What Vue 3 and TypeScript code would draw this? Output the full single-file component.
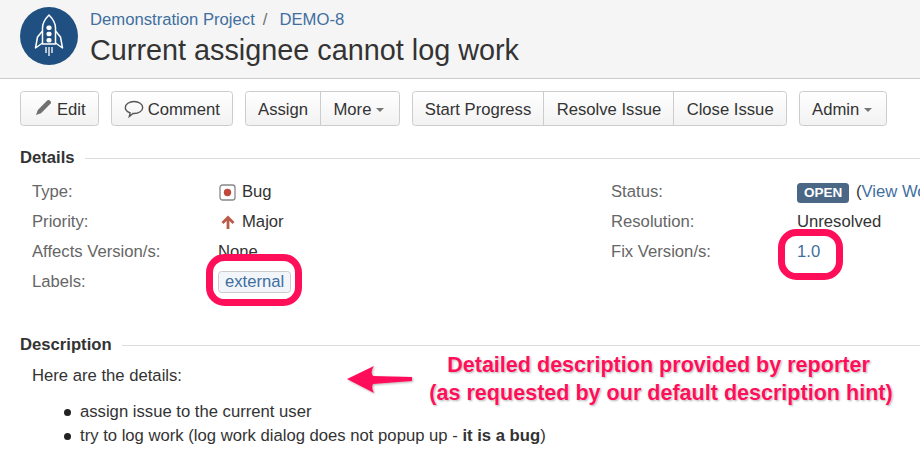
<script setup lang="ts">
interface Field { label: string; value: string; kind?: string }
const left: Field[] = [
  { label: 'Type:', value: 'Bug', kind: 'bug' },
  { label: 'Priority:', value: 'Major', kind: 'major' },
  { label: 'Affects Version/s:', value: 'None' },
  { label: 'Labels:', value: 'external', kind: 'label' },
]
const groups: string[][] = [['Assign', 'More'], ['Start Progress', 'Resolve Issue', 'Close Issue'], ['Admin']]
const hasCaret = (b: string): boolean => b === 'More' || b === 'Admin'
</script>

<template>
  <div class="page">
    <header class="head">
      <svg class="avatar" viewBox="0 0 58 58" width="58" height="58">
        <circle cx="29" cy="29" r="29" fill="#205081" />
        <g fill="none" stroke="#fff" stroke-width="1.5" stroke-linejoin="round">
          <path d="M29 8c-4 4-6.500 8-6.500 13v16h13V21c0-5-2.500-9-6.500-13z" />
          <path d="M22.500 24l-5 6-2 11 7-5M35.500 24l5 6 2 11-7-5" />
        </g>
        <rect x="26.500" y="18.500" width="5" height="4.500" rx="1.800" fill="#fff" />
        <rect x="26.500" y="24.800" width="5" height="4.500" rx="1.800" fill="#fff" />
        <rect x="26.500" y="31" width="5" height="4.500" rx="1.800" fill="#fff" />
        <path d="M29 40v9M26 40v6M32 40v6" stroke="#fff" stroke-width="1.300" fill="none" />
      </svg>
      <div class="titles">
        <div class="crumbs"><a>Demonstration Project</a><span class="sep">/</span><a>DEMO-8</a></div>
        <h1>Current assignee cannot log work</h1>
      </div>
    </header>

    <div class="toolbar">
      <button class="btn edit">
        <svg class="pencil" width="17" height="17" viewBox="0 0 17 17"><path d="M12.500 1.300q1-.8 2 0l1.200 1.200q.8 1 0 2L6 14.200 1 16l1.800-5z" fill="#707070" /></svg>Edit
      </button>
      <button class="btn comment">
        <svg class="bubble" width="20" height="18" viewBox="0 0 20 18"><path d="M10 1.500c4.800 0 8.700 2.600 8.700 6s-3.900 6-8.700 6H9l-3.700 3 .8-3.700C3.300 11.800 1.300 9.800 1.300 7.500c0-3.400 3.900-6 8.700-6z" fill="none" stroke="#555" stroke-width="1.400" /></svg>Comment
      </button>
      <div v-for="g in groups" :key="g[0]" class="group">
        <button v-for="b in g" :key="b" class="btn" :class="{ drop: hasCaret(b) }">
          {{ b }}<i v-if="hasCaret(b)" class="caret"></i>
        </button>
      </div>
    </div>

    <h2 class="module first"><span>Details</span></h2>
    <div class="details">
      <div class="col">
        <div v-for="f in left" :key="f.label" class="row">
          <span class="lab">{{ f.label }}</span>
          <span class="val">
            <svg v-if="f.kind === 'bug'" class="ic" width="17" height="17" viewBox="0 0 17 17"><rect x="1" y="1" width="15" height="15" rx="2.500" fill="#fff" stroke="#888" stroke-width="1.300" /><circle cx="8.500" cy="8.500" r="3.700" fill="#c0493b" /></svg>
            <svg v-if="f.kind === 'major'" class="ic" width="17" height="17" viewBox="0 0 17 17"><path d="M9 15V5M3.500 9L9 3.500 14.500 9" fill="none" stroke="#bb5b4a" stroke-width="2.800" /></svg>
            <a v-if="f.kind === 'label'" class="tag">{{ f.value }}</a>
            <template v-else>{{ f.value }}</template>
          </span>
        </div>
      </div>
      <div class="col second">
        <div class="row"><span class="lab">Status:</span><span class="val nowrap"><b class="lozenge">OPEN</b> (<a>View Workflow</a>)</span></div>
        <div class="row"><span class="lab">Resolution:</span><span class="val">Unresolved</span></div>
        <div class="row"><span class="lab">Fix Version/s:</span><span class="val"><a>1.0</a></span></div>
      </div>
    </div>

    <h2 class="module second-mod"><span>Description</span></h2>
    <div class="desc">
      <p>Here are the details:</p>
      <ul>
        <li>assign issue to the current user</li>
        <li>try to log work (log work dialog does not popup up - <b>it is a bug</b>)</li>
      </ul>
    </div>

    <svg class="marks" width="920" height="450" viewBox="0 0 920 450">
      <defs>
        <filter id="sh" x="-10%" y="-20%" width="120%" height="140%"><feDropShadow dx="1" dy="1" stdDeviation="1" flood-color="#000" flood-opacity=".3" /></filter>
      </defs>
      <rect x="209.500" y="257.500" width="89" height="45" rx="15" fill="none" stroke="#ff0f5a" stroke-width="7" />
      <rect x="781.500" y="232.500" width="58" height="44" rx="15" fill="none" stroke="#ff0f5a" stroke-width="7" />
      <path d="M347 379L374 366Q370 372 373 376L412 377V381L373 384Q371 387 374 393Z" fill="#ff0f5a" filter="url(#sh)" />
    </svg>
    <div class="note"><span class="l1">Detailed description provided by reporter</span><br />(as requested by our default description hint)</div>
  </div>
</template>

<style scoped>
.page { position: relative; width: 920px; height: 450px; overflow: hidden; background: #fff; color: #333; font: 16.670px/22px "Liberation Sans", Arial, sans-serif; }
a { color: #3f6f9f; }
.head { display: flex; gap: 12px; height: 79px; padding: 7px 20px 0; box-sizing: border-box; background: #f5f5f5; border-bottom: 1px solid #ccc; }
.avatar { flex: none; }
.crumbs { color: #707070; line-height: 24px; margin-top: 1px; }
.sep { margin: 0 12px 0 8px; }
h1 { margin: 0; font-size: 28.800px; font-weight: 400; line-height: 36px; color: #333; }
.toolbar { display: flex; gap: 12px; padding: 12px 20px 0; }
.btn { display: flex; align-items: center; gap: 5px; height: 35px; padding: 2px 12.200px 0; box-sizing: border-box; font: inherit; color: #333; background: linear-gradient(#fff, #f2f2f2); border: 1px solid #ccc; border-radius: 3.500px; }
.btn.drop { padding-right: 14.200px; }
.group { display: flex; }
.group .btn { border-radius: 0; margin-left: -1px; }
.group .btn:first-child { border-radius: 3.500px 0 0 3.500px; margin-left: 0; }
.group .btn:last-child { border-radius: 0 3.500px 3.500px 0; }
.group .btn:only-child { border-radius: 3.500px; }
.edit { padding: 2px 12px 0 14px; }
.comment { padding: 2px 12px 0; gap: 4px; }
.pencil { margin-top: -4px; }
.bubble { margin-top: -2px; }
.caret { width: 0; height: 0; border: 4px solid transparent; border-top-color: #777; border-bottom: 0; }
.module { display: flex; align-items: center; gap: 10px; margin: 0; padding-left: 20px; font-size: 16.670px; font-weight: 700; line-height: 20px; color: #333; }
.module::after { content: ""; flex: 1; height: 1px; background: #ddd; }
.first { margin-top: 22px; }
.second-mod { margin-top: 38px; }
.details { display: flex; padding: 9px 0 0 32px; }
.col { width: 579px; flex: none; }
.second { width: 320px; }
.row { display: flex; height: 30px; align-items: center; }
.lab { width: 186px; flex: none; color: #666; }
.val { display: flex; align-items: center; gap: 6px; white-space: nowrap; }
.nowrap { gap: 0; display: block; }
.ic { flex: none; margin-left: 1px; }
.tag { padding: 0 6px; line-height: 20px; background: #f2f5f9; border: 1px solid #ccc; border-radius: 3.500px; }
.lozenge { display: inline-block; padding: 0 7px; font-size: 13.500px; line-height: 20px; color: #fff; background: #4a6785; border-radius: 3.500px; margin-right: 2px; }
.desc { padding: 10px 0 0 32px; }
p { margin: 0; line-height: 22px; }
ul { margin: 13px 0 0; padding-left: 48px; list-style: none; }
li { position: relative; line-height: 24px; }
li::before { content: ""; position: absolute; left: -16.500px; top: 8.500px; width: 7px; height: 7px; border-radius: 50%; background: #222; }
.marks { position: absolute; left: 0; top: 0; pointer-events: none; }
.note { position: absolute; left: 402px; top: 351px; width: 518px; text-align: center; font-size: 21.550px; font-weight: 700; line-height: 28px; color: #ff0f5a; text-shadow: 0 0 2px #fff, 1px 1px 2px rgba(0,0,0,.35); }
.l1 { margin-right: 5px; }
</style>
